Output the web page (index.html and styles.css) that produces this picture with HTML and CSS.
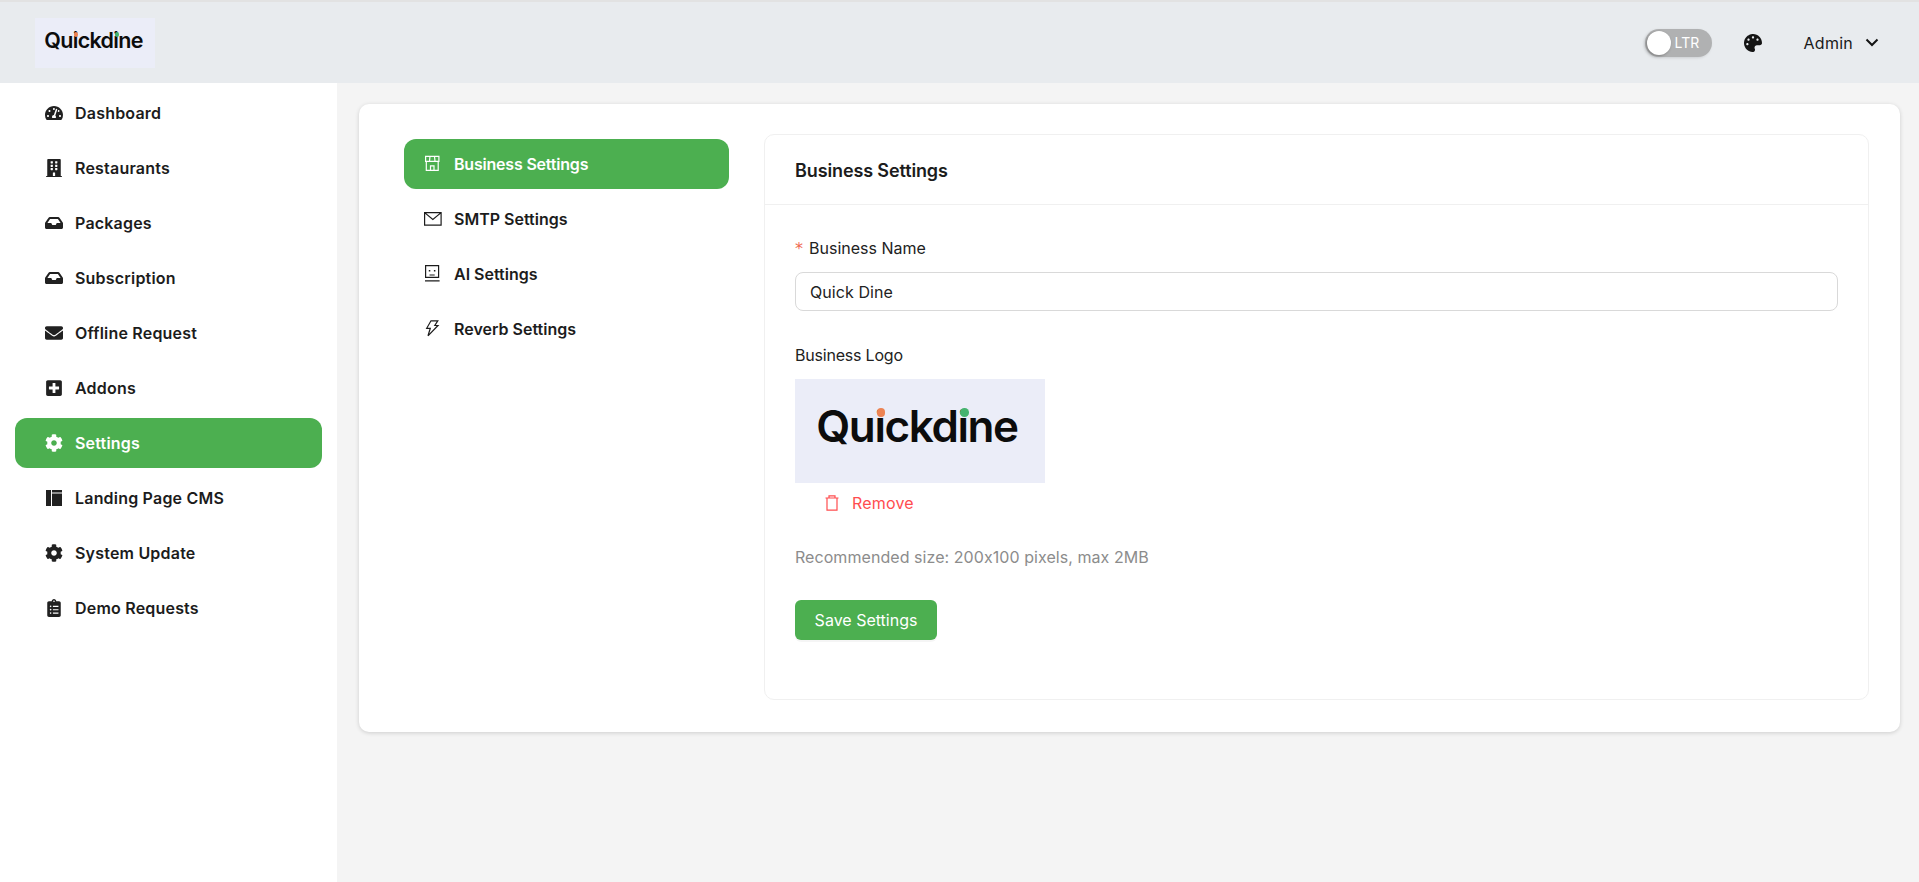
FILE: index.html
```html
<!DOCTYPE html>
<html lang="en">
<head>
<meta charset="utf-8">
<title>Business Settings</title>
<link rel="stylesheet" href="styles.css">
</head>
<body>
<header class="topbar">
  <div class="brand"><span class="logo logo-sm">Quickdine<i class="dot dot-o"></i><i class="dot dot-g"></i></span></div>
  <div class="top-actions">
    <div class="switch"><span class="knob"></span><span class="switch-text">LTR</span></div>
    <svg class="palette" viewBox="0 0 512 512"><path d="M204.3 5C104.9 24.4 24.8 104.3 5.2 203.4c-37 187 131.7 326.4 258.8 306.7 41.2-6.4 61.4-54.6 42.5-91.7-23.1-45.4 9.9-98.4 60.9-98.4h79.7c35.8 0 64.8-29.6 64.9-65.3C511.5 97.1 368.1-26.9 204.3 5zM96 320c-17.7 0-32-14.3-32-32s14.3-32 32-32 32 14.3 32 32-14.3 32-32 32zm32-128c-17.7 0-32-14.3-32-32s14.3-32 32-32 32 14.3 32 32-14.3 32-32 32zm128-64c-17.7 0-32-14.3-32-32s14.3-32 32-32 32 14.3 32 32-14.3 32-32 32zm128 64c-17.7 0-32-14.3-32-32s14.3-32 32-32 32 14.3 32 32-14.3 32-32 32z"/></svg>
    <div class="user"><span>Admin</span><svg class="chev" viewBox="0 0 14 9"><path d="M1.500 1.500 7 7l5.500-5.500"/></svg></div>
  </div>
</header>
<div class="layout">
  <nav class="sidebar">
    <a class="nav-item"><span class="nav-ico"><svg viewBox="0 0 576 576"><path transform="translate(0 32)" d="M288 32C128.94 32 0 160.94 0 320c0 52.8 14.25 102.26 39.06 144.8 5.61 9.62 16.3 15.2 27.44 15.2h443c11.14 0 21.83-5.58 27.44-15.2C561.75 422.26 576 372.8 576 320c0-159.06-128.94-288-288-288zm0 64c14.71 0 26.58 10.13 30.32 23.65-1.11 2.26-2.64 4.23-3.45 6.67l-9.22 27.67c-5.13 3.49-10.97 6.01-17.64 6.01-17.67 0-32-14.33-32-32S270.33 96 288 96zM96 384c-17.67 0-32-14.33-32-32s14.33-32 32-32 32 14.33 32 32-14.33 32-32 32zm48-160c-17.67 0-32-14.33-32-32s14.33-32 32-32 32 14.33 32 32-14.33 32-32 32zm246.77-72.41l-61.33 184C343.13 347.33 352 364.54 352 384c0 11.72-3.38 22.55-8.88 32H232.88c-5.5-9.45-8.88-20.28-8.88-32 0-33.94 26.5-61.43 59.9-63.59l61.34-184.01c4.17-12.56 17.73-19.45 30.36-15.17 12.57 4.19 19.35 17.79 15.17 30.36zm14.66 57.2l15.52-46.55c3.47-1.29 7.13-2.23 11.05-2.23 17.67 0 32 14.33 32 32s-14.33 32-32 32c-11.38-.01-20.89-6.28-26.57-15.22zM480 384c-17.67 0-32-14.33-32-32s14.33-32 32-32 32 14.33 32 32-14.33 32-32 32z"/></svg></span>Dashboard</a>
    <a class="nav-item"><span class="nav-ico"><svg viewBox="0 0 448 512"><path d="M436 480h-20V24c0-13.255-10.745-24-24-24H56C42.745 0 32 10.745 32 24v456H12c-6.627 0-12 5.373-12 12v20h448v-20c0-6.627-5.373-12-12-12zM128 76c0-6.627 5.373-12 12-12h40c6.627 0 12 5.373 12 12v40c0 6.627-5.373 12-12 12h-40c-6.627 0-12-5.373-12-12V76zm0 96c0-6.627 5.373-12 12-12h40c6.627 0 12 5.373 12 12v40c0 6.627-5.373 12-12 12h-40c-6.627 0-12-5.373-12-12v-40zm52 148h-40c-6.627 0-12-5.373-12-12v-40c0-6.627 5.373-12 12-12h40c6.627 0 12 5.373 12 12v40c0 6.627-5.373 12-12 12zm76 160h-64v-84c0-6.627 5.373-12 12-12h40c6.627 0 12 5.373 12 12v84zm64-172c0 6.627-5.373 12-12 12h-40c-6.627 0-12-5.373-12-12v-40c0-6.627 5.373-12 12-12h40c6.627 0 12 5.373 12 12v40zm0-96c0 6.627-5.373 12-12 12h-40c-6.627 0-12-5.373-12-12v-40c0-6.627 5.373-12 12-12h40c6.627 0 12 5.373 12 12v40zm0-96c0 6.627-5.373 12-12 12h-40c-6.627 0-12-5.373-12-12V76c0-6.627 5.373-12 12-12h40c6.627 0 12 5.373 12 12v40z"/></svg></span>Restaurants</a>
    <a class="nav-item"><span class="nav-ico"><svg viewBox="0 0 576 512"><path d="M567.938 243.908L462.25 85.374A48.003 48.003 0 0 0 422.311 64H153.689a48 48 0 0 0-39.938 21.374L8.062 243.908A47.994 47.994 0 0 0 0 270.533V400c0 26.51 21.49 48 48 48h480c26.51 0 48-21.49 48-48V270.533a47.994 47.994 0 0 0-8.062-26.625zM162.252 128h251.497l85.333 128H376l-32 64H232l-32-64H76.918l85.334-128z"/></svg></span>Packages</a>
    <a class="nav-item"><span class="nav-ico"><svg viewBox="0 0 576 512"><path d="M567.938 243.908L462.25 85.374A48.003 48.003 0 0 0 422.311 64H153.689a48 48 0 0 0-39.938 21.374L8.062 243.908A47.994 47.994 0 0 0 0 270.533V400c0 26.51 21.49 48 48 48h480c26.51 0 48-21.49 48-48V270.533a47.994 47.994 0 0 0-8.062-26.625zM162.252 128h251.497l85.333 128H376l-32 64H232l-32-64H76.918l85.334-128z"/></svg></span>Subscription</a>
    <a class="nav-item"><span class="nav-ico"><svg viewBox="0 0 512 512"><path d="M502.3 190.8c3.9-3.1 9.7-.2 9.7 4.7V400c0 26.5-21.5 48-48 48H48c-26.5 0-48-21.5-48-48V195.6c0-5 5.7-7.8 9.7-4.7 22.4 17.4 52.1 39.5 154.1 113.6 21.1 15.4 56.7 47.8 92.2 47.6 35.7.3 72-32.8 92.3-47.6 102-74.1 131.6-96.3 154-113.7zM256 320c23.2.4 56.6-29.2 73.4-41.4 132.7-96.3 142.8-104.7 173.4-128.7 5.8-4.5 9.2-11.5 9.2-18.9v-19c0-26.5-21.5-48-48-48H48C21.5 64 0 85.5 0 112v19c0 7.4 3.4 14.3 9.2 18.9 30.6 23.9 40.7 32.4 173.4 128.7 16.8 12.2 50.2 41.8 73.4 41.4z"/></svg></span>Offline Request</a>
    <a class="nav-item"><span class="nav-ico"><svg viewBox="0 0 448 512"><path d="M400 32H48C21.500 32 0 53.500 0 80v352c0 26.500 21.500 48 48 48h352c26.500 0 48-21.500 48-48V80c0-26.500-21.500-48-48-48zm-32 252c0 6.600-5.400 12-12 12h-92v92c0 6.600-5.400 12-12 12h-56c-6.600 0-12-5.400-12-12v-92H92c-6.600 0-12-5.400-12-12v-56c0-6.600 5.400-12 12-12h92v-92c0-6.600 5.400-12 12-12h56c6.600 0 12 5.400 12 12v92h92c6.600 0 12 5.400 12 12v56z"/></svg></span>Addons</a>
    <a class="nav-item active"><span class="nav-ico"><svg viewBox="0 0 512 512"><path d="M487.4 315.7l-42.6-24.6c4.3-23.2 4.3-47 0-70.2l42.6-24.6c4.9-2.8 7.1-8.6 5.5-14-11.1-35.6-30-67.8-54.7-94.6-3.8-4.1-10-5.1-14.8-2.3L380.8 110c-17.9-15.4-38.5-27.3-60.8-35.1V25.8c0-5.6-3.9-10.5-9.4-11.7-36.7-8.2-74.3-7.8-109.2 0-5.5 1.2-9.4 6.1-9.4 11.7V75c-22.2 7.9-42.8 19.8-60.8 35.1L88.7 85.5c-4.9-2.8-11-1.9-14.8 2.3-24.7 26.7-43.6 58.9-54.7 94.6-1.7 5.4.6 11.2 5.5 14L67.3 221c-4.3 23.2-4.3 47 0 70.2l-42.6 24.6c-4.9 2.8-7.1 8.6-5.5 14 11.1 35.6 30 67.8 54.7 94.6 3.8 4.1 10 5.1 14.8 2.3l42.6-24.6c17.9 15.4 38.5 27.3 60.8 35.1v49.2c0 5.6 3.9 10.5 9.4 11.7 36.7 8.2 74.3 7.8 109.2 0 5.5-1.2 9.4-6.1 9.4-11.7v-49.2c22.2-7.9 42.8-19.8 60.8-35.1l42.6 24.6c4.9 2.8 11 1.9 14.8-2.3 24.7-26.7 43.6-58.9 54.7-94.6 1.5-5.5-.7-11.3-5.6-14.1zM256 336c-44.1 0-80-35.9-80-80s35.9-80 80-80 80 35.9 80 80-35.9 80-80 80z"/></svg></span>Settings</a>
    <a class="nav-item"><span class="nav-ico"><svg viewBox="-1 -1 18 18"><path d="M0 0h5v16H0zM6 0h10v2.400H6zM6 3.600h10V16H6z"/></svg></span>Landing Page CMS</a>
    <a class="nav-item"><span class="nav-ico"><svg viewBox="0 0 512 512"><path d="M487.4 315.7l-42.6-24.6c4.3-23.2 4.3-47 0-70.2l42.6-24.6c4.9-2.8 7.1-8.6 5.5-14-11.1-35.6-30-67.8-54.7-94.6-3.8-4.1-10-5.1-14.8-2.3L380.8 110c-17.9-15.4-38.5-27.3-60.8-35.1V25.8c0-5.6-3.9-10.5-9.4-11.7-36.7-8.2-74.3-7.8-109.2 0-5.5 1.2-9.4 6.1-9.4 11.7V75c-22.2 7.9-42.8 19.8-60.8 35.1L88.7 85.5c-4.9-2.8-11-1.9-14.8 2.3-24.7 26.7-43.6 58.9-54.7 94.6-1.7 5.4.6 11.2 5.5 14L67.3 221c-4.3 23.2-4.3 47 0 70.2l-42.6 24.6c-4.9 2.8-7.1 8.6-5.5 14 11.1 35.6 30 67.8 54.7 94.6 3.8 4.1 10 5.1 14.8 2.3l42.6-24.6c17.9 15.4 38.5 27.3 60.8 35.1v49.2c0 5.6 3.9 10.5 9.4 11.7 36.7 8.2 74.3 7.8 109.2 0 5.5-1.2 9.4-6.1 9.4-11.7v-49.2c22.2-7.9 42.8-19.8 60.8-35.1l42.6 24.6c4.9 2.8 11 1.9 14.8-2.3 24.7-26.7 43.6-58.9 54.7-94.6 1.5-5.5-.7-11.3-5.6-14.1zM256 336c-44.1 0-80-35.9-80-80s35.9-80 80-80 80 35.9 80 80-35.9 80-80 80z"/></svg></span>System Update</a>
    <a class="nav-item"><span class="nav-ico"><svg viewBox="0 0 384 512"><path d="M336 64h-80c0-35.3-28.7-64-64-64s-64 28.7-64 64H48C21.5 64 0 85.5 0 112v352c0 26.5 21.5 48 48 48h288c26.5 0 48-21.5 48-48V112c0-26.5-21.5-48-48-48zM96 424c-13.3 0-24-10.7-24-24s10.7-24 24-24 24 10.7 24 24-10.7 24-24 24zm0-96c-13.3 0-24-10.7-24-24s10.7-24 24-24 24 10.7 24 24-10.7 24-24 24zm0-96c-13.3 0-24-10.7-24-24s10.7-24 24-24 24 10.7 24 24-10.7 24-24 24zm96-192c13.3 0 24 10.7 24 24s-10.7 24-24 24-24-10.7-24-24 10.7-24 24-24zm128 368c0 4.4-3.6 8-8 8H168c-4.4 0-8-3.6-8-8v-16c0-4.4 3.6-8 8-8h144c4.4 0 8 3.6 8 8v16zm0-96c0 4.4-3.6 8-8 8H168c-4.4 0-8-3.6-8-8v-16c0-4.4 3.6-8 8-8h144c4.4 0 8 3.6 8 8v16zm0-96c0 4.4-3.6 8-8 8H168c-4.4 0-8-3.6-8-8v-16c0-4.4 3.6-8 8-8h144c4.4 0 8 3.6 8 8v16z"/></svg></span>Demo Requests</a>
  </nav>
  <main class="content">
    <section class="card">
      <div class="tabs">
        <a class="tab active"><span class="tab-ico"><svg viewBox="0 0 18 18"><path d="M1.600 1.300h13.300v5H1.600zM1.600 6.300h13.300M6 1.300l-.5 5M10.500 1.300l.5 5M2.300 6.300v9h11.900v-9M6.500 15.300v-4.500h3.500v4.500"/></svg></span>Business Settings</a>
        <a class="tab"><span class="tab-ico"><svg viewBox="0 0 18 18"><path d="M.6 2.600h16.500v12.500H.6zM.6 2.600 8.850 9.500 17.100 2.600"/></svg></span>SMTP Settings</a>
        <a class="tab"><span class="tab-ico"><svg viewBox="0 0 18 18"><path d="M1.600.7h13v11.600h-13zM1 15.900h14.600M5.500 10h5.200"/><path class="fill" d="M4.800 5h1.500v1.500H4.800zM9.900 5h1.500v1.500H9.900z"/></svg></span>AI Settings</a>
        <a class="tab"><span class="tab-ico"><svg viewBox="0 0 18 18"><path d="M7 .8h6.800l-3 4.700H14L4 15.800l2.300-7.500H2.700z"/></svg></span>Reverb Settings</a>
      </div>
      <div class="panel">
        <h2 class="panel-head">Business Settings</h2>
        <form class="panel-body">
          <label class="field-label field-name"><span class="req">*</span>Business Name</label>
          <input class="text-input" type="text" value="Quick Dine">
          <div class="field-label logo-label">Business Logo</div>
          <div class="logo-box"><span class="logo logo-lg">Quickdine<i class="dot dot-o"></i><i class="dot dot-g"></i></span></div>
          <div class="remove"><svg viewBox="0 0 14 16"><path d="M.5 3h13M4 3V.8h6V3M2 3v12.200h10V3"/></svg><span>Remove</span></div>
          <p class="hint">Recommended size: 200x100 pixels, max 2MB</p>
          <button class="save" type="button">Save Settings</button>
        </form>
      </div>
    </section>
  </main>
</div>
</body>
</html>
```
FILE: styles.css
```css
* { box-sizing: border-box; }
html, body { margin: 0; height: 100%; overflow: hidden; }
body {
  font-family: "Inter", "Liberation Sans", sans-serif;
  font-size: 16px;
  color: #1a1a1a;
  background: #f4f4f4;
  display: flex;
  flex-direction: column;
  height: 882px;
}
.topbar {
  height: 83px;
  flex: none;
  background: #e8ebee;
  border-top: 2px solid #e2e2e2;
  display: flex;
  align-items: center;
  justify-content: space-between;
  padding: 0 40px 0 35px;
}
.brand {
  width: 120px;
  height: 50px;
  margin-top: 1px;
  padding: 0 3px 4px 0;
  background: #ebedf8;
  display: flex;
  align-items: center;
  justify-content: center;
}
.logo {
  position: relative;
  display: inline-block;
  font-family: "Inter", sans-serif;
  font-weight: 600;
  color: #0c0c0c;
  line-height: 1;
}
.logo-sm { font-size: 21.5px; letter-spacing: -.7px; }
.logo-lg { font-size: 44px; letter-spacing: -1.4px; }
.dot { position: absolute; border-radius: 50%; }
.dot-o { background: #ec8353; left: 30%; }
.dot-g { background: #45b36f; left: 71.5%; }
.logo-sm .dot { width: 4.2px; height: 4.2px; top: 2.200px; }
.logo-lg .dot { width: 8.600px; height: 8.600px; top: 4px; }
.top-actions { display: flex; align-items: center; }
.switch {
  width: 67px;
  height: 28px;
  border-radius: 14px;
  background: #b0b1b2;
  display: flex;
  align-items: center;
  padding-left: 2px;
  box-shadow: -1px 1px 3px rgba(0,0,0,.12);
}
.knob {
  width: 24px;
  height: 24px;
  border-radius: 50%;
  background: #fff;
  box-shadow: -1px 1px 3px rgba(0,0,0,.3);
  flex: none;
}
.switch-text { color: #fff; font-size: 14px; margin-left: 4px; }
.palette { width: 18px; height: 18px; margin-left: 32px; fill: #141414; }
.user { display: flex; align-items: center; margin-left: 42px; font-size: 16px; letter-spacing: .25px; }
.chev { width: 14px; height: 9px; margin-left: 12px; fill: none; stroke: #141414; stroke-width: 2; }
.layout { flex: 1; display: flex; min-height: 0; }
.sidebar {
  width: 337px;
  flex: none;
  background: #fff;
  padding: 5px 15px;
  display: flex;
  flex-direction: column;
  gap: 5px;
}
.nav-item {
  height: 50px;
  width: 307px;
  display: flex;
  align-items: center;
  padding-left: 30px;
  border-radius: 12px;
  font-weight: 600;
  font-size: 16px;
  letter-spacing: .2px;
  color: #1c1c1c;
}
.nav-item.active { background: #4caf50; color: #fff; }
.nav-ico { width: 30px; height: 18px; flex: none; fill: #212121; }
.nav-item.active .nav-ico { fill: #fff; }
.nav-ico svg { width: 18px; height: 18px; fill: inherit; display: block; }
.content { flex: 1; padding: 21px 19px 0 22px; min-width: 0; }
.card {
  height: 628px;
  background: #fff;
  border-radius: 10px;
  box-shadow: 0 1px 4px rgba(0,0,0,.16);
  padding: 30px 31px 30px 45px;
  display: flex;
}
.tabs { width: 325px; flex: none; margin-right: 35px; display: flex; flex-direction: column; gap: 5px; padding-top: 5px; }
.tab {
  height: 50px;
  display: flex;
  align-items: center;
  padding-left: 20px;
  border-radius: 12px;
  font-weight: 600;
  color: #1c1c1c;
}
.tab.active { background: #4caf50; color: #fff; letter-spacing: -.2px; }
.tab-ico { width: 30px; height: 18px; flex: none; }
.tab-ico svg { width: 18px; height: 18px; display: block; fill: none; stroke: currentColor; stroke-width: 1.2; }
.tab-ico .fill { fill: currentColor; stroke: none; }
.panel {
  flex: 1;
  min-width: 0;
  border: 1px solid #f0f0f0;
  border-radius: 10px;
  height: 566px;
}
.panel-head {
  margin: 0;
  height: 70px;
  display: flex;
  align-items: center;
  padding: 2px 30px 0;
  font-size: 18px;
  font-weight: 600;
  letter-spacing: -.12px;
  color: #1c1c1c;
  border-bottom: 1px solid #f0f0f0;
}
.panel-body { padding: 31px 30px 0; }
.field-label { display: block; line-height: 24px; height: 24px; font-size: 16px; color: #222; letter-spacing: -.2px; }
.field-name { letter-spacing: 0; }
.req { color: #f0674f; display: inline-block; width: 14px; font-family: "DejaVu Sans", sans-serif; }
.text-input {
  display: block;
  width: 100%;
  height: 39px;
  margin-top: 12px;
  border: 1px solid #d9d9d9;
  border-radius: 8px;
  padding: 0 14px;
  font: 400 16px "Inter", sans-serif;
  letter-spacing: .08px;
  color: #222;
  background: #fff;
}
.logo-label { margin-top: 32px; }
.logo-box {
  width: 250px;
  height: 104px;
  margin-top: 12px;
  padding: 0 6px 10px 0;
  background: #ebedf8;
  display: flex;
  align-items: center;
  justify-content: center;
}
.remove {
  height: 32px;
  margin-top: 4px;
  display: flex;
  align-items: center;
  padding-left: 30px;
  color: #ff4d4f;
  letter-spacing: .2px;
  line-height: 1;
}
.remove svg { width: 14px; height: 16px; fill: none; stroke: #ff4d4f; stroke-width: 1.2; margin-right: 13px; }
.hint { margin: 26px 0 0; line-height: 24px; color: #8c8c8c; letter-spacing: .06px; font-feature-settings: "calt" 0; }
.save {
  display: block;
  margin-top: 31px;
  width: 142px;
  height: 40px;
  border: 0;
  border-radius: 6px;
  background: #4caf50;
  color: #fff;
  font: 400 16px "Inter", sans-serif;
  box-shadow: 0 2px 0 rgba(0,0,0,.04);
}
```
